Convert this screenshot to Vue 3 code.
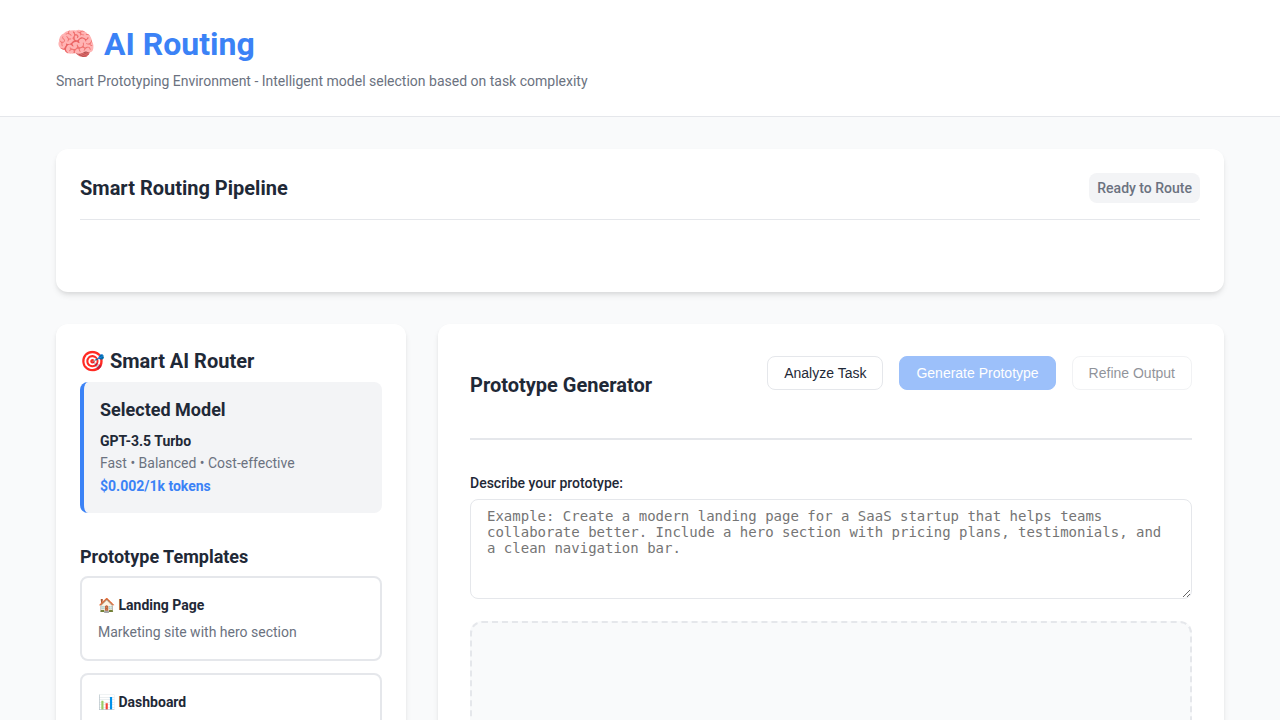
<script setup>
const templates = [
  { title: '🏠 Landing Page', text: 'Marketing site with hero section' },
  { title: '📊 Dashboard', text: '' },
]
const placeholder = 'Example: Create a modern landing page for a SaaS startup that helps teams collaborate better. Include a hero section with pricing plans, testimonials, and a clean navigation bar.'
</script>

<template>
  <div class="app">
    <header class="header">
      <h1>🧠 AI Routing</h1>
      <p>Smart Prototyping Environment - Intelligent model selection based on task complexity</p>
    </header>
    <main class="main">
      <section class="card pipeline">
        <div class="pipeline-head">
          <h2>Smart Routing Pipeline</h2>
          <span class="status">Ready to Route</span>
        </div>
      </section>
      <div class="columns">
        <aside class="card sidebar">
          <h2>🎯 Smart AI Router</h2>
          <div class="model">
            <h3>Selected Model</h3>
            <div class="name">GPT-3.5 Turbo</div>
            <div class="desc">Fast • Balanced • Cost-effective</div>
            <div class="cost">$0.002/1k tokens</div>
          </div>
          <h3 class="templates-title">Prototype Templates</h3>
          <div v-for="t in templates" :key="t.title" class="template">
            <div class="template-title">{{ t.title }}</div>
            <div class="template-text">{{ t.text }}</div>
          </div>
        </aside>
        <section class="card generator">
          <div class="generator-head">
            <h2>Prototype Generator</h2>
            <div class="actions">
              <button>Analyze Task</button>
              <button class="primary" disabled>Generate Prototype</button>
              <button disabled>Refine Output</button>
            </div>
          </div>
          <label for="prompt">Describe your prototype:</label>
          <textarea id="prompt" :placeholder="placeholder"></textarea>
          <div class="output"></div>
        </section>
      </div>
    </main>
  </div>
</template>

<style>
body { overflow: hidden; }
</style>

<style scoped>
* { box-sizing: border-box; }
h1, h2, h3, p { margin: 0; }
.app {
  height: 720px;
  overflow: hidden;
  background: #f9fafb;
  color: #1f2937;
  font: 14px/1.6 Roboto, sans-serif;
}
.header {
  height: 117px;
  padding: 19px 56px 0;
  background: #fff;
  border-bottom: 1px solid #e5e7eb;
}
.header h1 { color: #3b82f6; font-size: 32px; font-weight: 700; line-height: 51px; }
.header p { color: #6b7280; }
.main { padding: 32px 56px; }
.card {
  background: #fff;
  border-radius: 12px;
  box-shadow: 0 4px 6px -1px rgba(0, 0, 0, .1), 0 2px 4px -1px rgba(0, 0, 0, .06);
}
.pipeline { height: 143px; padding: 24px; }
.pipeline-head {
  display: flex;
  justify-content: space-between;
  height: 47px;
  border-bottom: 1px solid #e5e7eb;
}
h2 { font-size: 20px; font-weight: 700; line-height: 30px; }
h3 { font-size: 18px; font-weight: 700; line-height: 29px; }
.status {
  height: 30px;
  padding: 0 8px;
  line-height: 30px;
  border-radius: 8px;
  background: #f3f4f6;
  color: #6b7280;
  font-weight: 500;
}
.columns {
  display: grid;
  grid-template-columns: 350px 1fr;
  gap: 32px;
  margin-top: 32px;
}
.sidebar { height: 700px; padding: 22px 24px; }
.sidebar h2 { margin-bottom: 6px; }
.model {
  height: 131px;
  padding: 13px 16px;
  background: #f3f4f6;
  border-left: 4px solid #3b82f6;
  border-radius: 8px;
}
.name { margin-top: 6px; font-weight: 700; }
.desc { color: #6b7280; }
.cost { color: #3b82f6; font-weight: 700; }
.templates-title { margin: 29px 0 5px; }
.template {
  height: 85px;
  margin-bottom: 12px;
  padding: 16px;
  border: 2px solid #e5e7eb;
  border-radius: 8px;
}
.template-title { font-weight: 700; }
.template-text { margin-top: 5px; color: #6b7280; }
.generator { height: 700px; padding: 32px; }
.generator-head {
  display: flex;
  justify-content: space-between;
  height: 84px;
  border-bottom: 2px solid #e5e7eb;
}
.generator-head h2 { margin-top: 14px; }
.actions { display: flex; align-items: flex-start; gap: 16px; }
button {
  height: 34px;
  padding: 0 16px;
  border: 1px solid #e5e7eb;
  border-radius: 8px;
  background: #fff;
  color: #1f2937;
  font: 14px "Liberation Sans", sans-serif;
}
button:disabled { opacity: .5; }
.primary { background: #3b82f6; border-color: #3b82f6; color: #fff; }
label { display: block; margin-top: 32px; font-weight: 500; }
textarea {
  display: block;
  width: 100%;
  height: 100px;
  margin: 5px 0 22px;
  padding: 8px 16px;
  border: 1px solid #e5e7eb;
  border-radius: 8px;
  resize: vertical;
  font: 14px "DejaVu Sans Mono", monospace;
}
.output { height: 300px; border: 2px dashed #e5e7eb; border-radius: 12px; background: #f9fafb; }
</style>
